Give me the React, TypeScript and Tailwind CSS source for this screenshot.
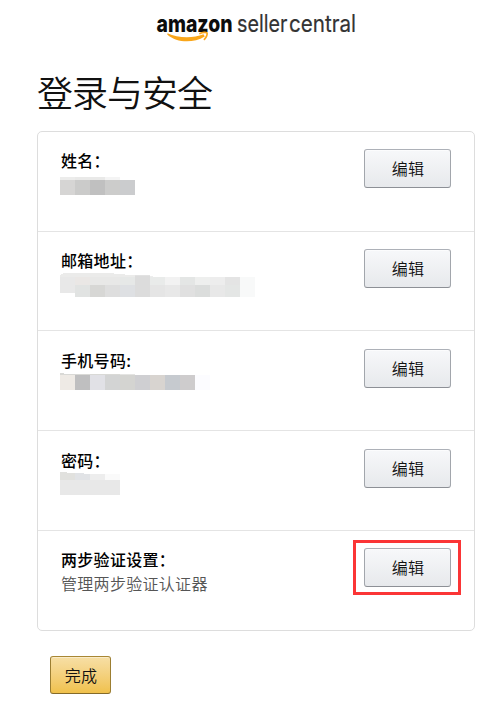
import React from 'react';

// Each mask is a stack of strips, each strip a list of coloured cells
type Cell = { w: string; color: string };
type Strip = { h: string; cells: Cell[] };

const cell = (color: string, w = "w-[15px]"): Cell => ({ w, color });

const nameMask: Strip[] = [
  { h: "h-[3px]", cells: [cell("bg-[#ececeb]"), cell("bg-[#e9e9e8]"), cell("bg-[#e9e9e8]"), cell("bg-[#f4f4f4]")] },
  {
    h: "h-[15px]",
    cells: [cell("bg-[#d6d5d4]"), cell("bg-[#cbcbca]"), cell("bg-[#c0c0c0]"), cell("bg-[#cccccb]"), cell("bg-[#cbccce]")],
  },
];

const mailMask: Strip[] = [
  { h: "h-px", cells: [cell("bg-transparent", "w-[3px]"), cell("bg-[#ebebea]", "w-[51px]")] },
  { h: "h-px", cells: [cell("bg-transparent", "w-px"), cell("bg-[#ebebea]", "w-[64px]")] },
  { h: "h-px", cells: [cell("bg-[#ebebea]", "w-[75px]"), cell("bg-[#e2e2e2]")] },
  { h: "h-px", cells: [cell("bg-[#ebebea]", "w-[75px]"), cell("bg-[#dcdcdc]"), cell("bg-[#ededed]", "w-[3px]")] },
  {
    h: "h-[8px]",
    cells: [
      cell("bg-[#e8e8e8]"), cell("bg-[#eae7e5]"), cell("bg-[#e8e8e7]"), cell("bg-[#e8e8e7]"), cell("bg-[#e6e8e7]"),
      cell("bg-[#dcdcdc]"), cell("bg-[#e9ebea]"), cell("bg-[#f2f2f2]"), cell("bg-[#e4e6e5]"), cell("bg-[#eeefee]"),
      cell("bg-[#ededed]"), cell("bg-[#e4e4e4]"), cell("bg-[#f8f9f9]"),
    ],
  },
  {
    h: "h-[8px]",
    cells: [
      cell("bg-[#e8e8e8]"), cell("bg-[#e1e3e2]"), cell("bg-[#d7d7d5]"), cell("bg-[#dedede]"), cell("bg-[#dee0e3]"),
      cell("bg-[#dcdcdc]"), cell("bg-[#e5e5e5]"), cell("bg-[#e8e8e8]"), cell("bg-[#e0e0e0]"), cell("bg-[#dbdddc]"),
      cell("bg-[#e8e8e8]"), cell("bg-[#e4e6e5]"), cell("bg-[#f8f9f9]"),
    ],
  },
  {
    h: "h-[4px]",
    cells: [
      cell("bg-transparent"), cell("bg-[#e1e3e2]"), cell("bg-[#d7d7d5]"), cell("bg-[#dedede]"), cell("bg-[#dee0e3]"),
      cell("bg-[#dcdcdc]"), cell("bg-[#e5e5e5]"), cell("bg-[#e8e8e8]"), cell("bg-[#e0e0e0]"), cell("bg-[#dbdddc]"),
      cell("bg-[#e8e8e8]"), cell("bg-[#e4e6e5]"), cell("bg-[#f8f9f9]"),
    ],
  },
];

const phoneMask: Strip[] = [
  { h: "h-px", cells: [cell("bg-[#d9d9d6]", "w-[4px]")] },
  { h: "h-px", cells: [cell("bg-[#d9d9d6]", "w-[60px]"), cell("bg-[#e4e4e2]")] },
  {
    h: "h-[15px]",
    cells: [
      cell("bg-[#eeeae5]"), cell("bg-[#bfbfc0]"), cell("bg-[#e1e1e6]"), cell("bg-[#d3d4d4]"), cell("bg-[#d4d4d1]"),
      cell("bg-[#cfcfd2]"), cell("bg-[#d8d4d0]"), cell("bg-[#c6cacf]"), cell("bg-[#cecccd]"), cell("bg-[#fcfcff]"),
    ],
  },
];

const passwordMask: Strip[] = [
  { h: "h-px", cells: [cell("bg-[#e1e1de]", "w-[7px]")] },
  { h: "h-px", cells: [cell("bg-[#e1e1de]"), cell("bg-[#e1e3e6]", "w-[9px]")] },
  { h: "h-[6px]", cells: [cell("bg-[#e1e1de]"), cell("bg-[#e1e3e6]"), cell("bg-[#ededed]"), cell("bg-[#fafafa]")] },
  { h: "h-[15px]", cells: [cell("bg-[#e8e8e8]", "w-[60px]")] },
];

const rows = [
  { label: "姓名：", height: "h-[100px]", pad: "pt-[16px]", maskTop: "mt-[5px]", mask: nameMask },
  { label: "邮箱地址：", height: "h-[99px]", pad: "pt-[16px]", maskTop: "mt-px", mask: mailMask },
  { label: "手机号码:", height: "h-[100px]", pad: "pt-[17px]", maskTop: "mt-px", mask: phoneMask },
  { label: "密码：", height: "h-[100px]", pad: "pt-[17px]", maskTop: "mt-0", mask: passwordMask },
  { label: "两步验证设置：", height: "h-[99px]", pad: "pt-[16px]", text: "管理两步验证认证器", marked: true },
];

function Logo() {
  return (
    <svg width="204" height="36" viewBox="0 0 204 36" className="block overflow-visible" fontFamily="Inter, sans-serif">
      <text x="0.5" y="24.3" fontSize="24" fontWeight="800" fill="#0c0c0c" textLength="76" lengthAdjust="spacingAndGlyphs">amazon</text>
      <text x="81" y="24.3" fontSize="24" fill="#333333" stroke="#333333" strokeWidth="0.2" textLength="50.5" lengthAdjust="spacingAndGlyphs">seller</text>
      <text x="133" y="24.3" fontSize="24" fill="#333333" stroke="#333333" strokeWidth="0.2" textLength="67" lengthAdjust="spacingAndGlyphs">central</text>
      <path d="M11.5 25.2 C22 30.2 37 30.4 47.5 26.2 L48.8 28.4 C37 35.4 21 35 11.2 26.4 Z" fill="#f9a61a" />
      <path d="M44 25.6 C46.5 24.2 50 24 51 24.9 C51.6 26.2 50.4 29.4 48.4 31.4" fill="none" stroke="#f9a61a" strokeWidth="1.7" strokeLinecap="round" />
    </svg>
  );
}

function Mask({ strips }: { strips: Strip[] }) {
  return (
    <div className="-ml-px">
      {strips.map((strip, i) => (
        <div key={i} className={`flex ${strip.h}`}>
          {strip.cells.map((c, j) => (
            <span key={j} className={`h-full shrink-0 ${c.w} ${c.color}`}></span>
          ))}
        </div>
      ))}
    </div>
  );
}

function EditButton() {
  return (
    <button className="block w-[87px] h-[39px] rounded-[3px] border border-[#adb1b8] border-x-[#a2a6ac] border-b-[#8d9096] bg-linear-to-b from-[#f7f8fa] to-[#e7e9ec] shadow-[inset_0_1px_0_rgba(255,255,255,0.6)] pl-px text-[16px] leading-[37px] tracking-[0.3px] font-[350] text-[#111]">
      编辑
    </button>
  );
}

export default function App() {
  return (
    <div className="w-[491px] h-[706px] overflow-hidden bg-white font-['Noto_Sans_CJK_SC',sans-serif] text-[#111]">
      <header className="pt-2 pl-[156px]">
        <Logo />
      </header>

      <main className="pl-[37px]">
        <h1 className="mt-[22px] h-[50px] text-[36px] leading-[50px] tracking-[-1px] font-[350]">登录与安全</h1>

        <div className="mt-[15px] w-[438px] h-[500px] rounded-[5px] border border-[#dddddd]">
          {rows.map((row, index) => (
            <section
              key={index}
              className={`flex justify-between pl-[23px] ${row.height} ${index < rows.length - 1 ? "border-b border-[#e4e4e4]" : ""}`}
            >
              <div className={row.pad}>
                <h2 className="h-[24px] text-[16px] leading-[24px] tracking-[0.3px] font-medium text-black whitespace-nowrap">{row.label}</h2>
                {row.mask && (
                  <div className={row.maskTop}>
                    <Mask strips={row.mask} />
                  </div>
                )}
                {row.text && (
                  <p className="text-[16px] leading-[24px] tracking-[0.3px] font-[350] text-[#555]">{row.text}</p>
                )}
              </div>
              {row.marked ? (
                <div className="mt-[9px] mr-[13px] w-[108px] h-[55px] border-3 border-[#fb3536] pt-[5px] pl-[8px]">
                  <EditButton />
                </div>
              ) : (
                <div className={`mr-[23px] ${index > 1 ? "pt-[18px]" : "pt-[17px]"}`}>
                  <EditButton />
                </div>
              )}
            </section>
          ))}
        </div>

        <button className="block mt-[25px] ml-[13px] w-[61px] h-[38px] rounded-[3px] border border-[#a88734] border-x-[#9c7e31] border-b-[#846a29] bg-linear-to-b from-[#f7dfa5] to-[#f0c14b] shadow-[inset_0_1px_0_rgba(255,255,255,0.4)] pl-px text-[16px] leading-[35px] tracking-[0.3px] font-[350] text-[#111]">
          完成
        </button>
      </main>
    </div>
  );
}
